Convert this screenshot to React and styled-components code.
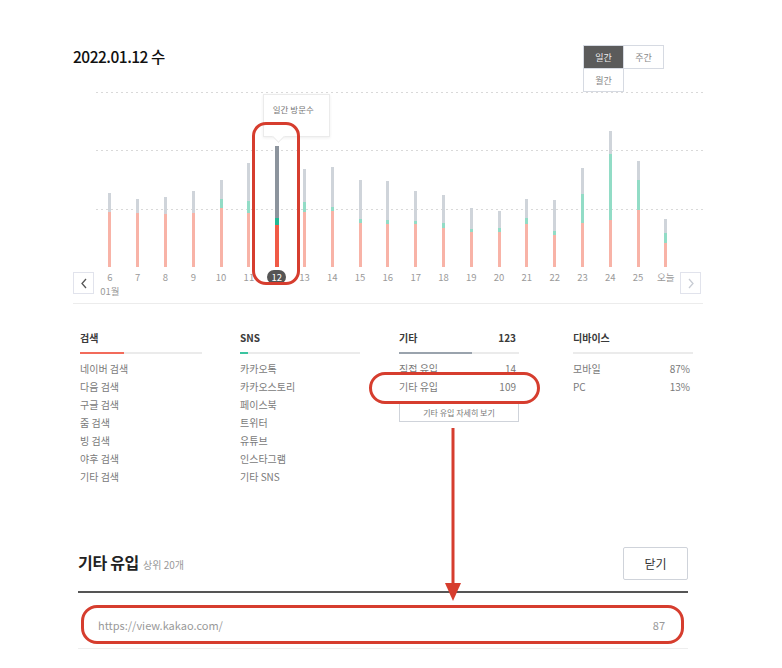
import styled, { createGlobalStyle } from "styled-components";

const GlobalStyle = createGlobalStyle`
  body {
    margin: 0;
    background: #fff;
    font-family: "Noto Sans CJK KR", "Noto Sans", sans-serif;
  }
`;

const RED = "#d63d2e";

const Page = styled.div`
  position: relative;
  width: 782px;
  height: 668px;
  padding: 45px 79px 0 73px;
  box-sizing: border-box;
  overflow: hidden;
`;

const Header = styled.div`
  display: flex;
  justify-content: space-between;
  align-items: flex-start;
  height: 46px;
  padding-right: 40px;
`;

const DateTitle = styled.h2`
  margin: 0;
  font-size: 15.5px;
  line-height: 22px;
  font-weight: 500;
  color: #111;
  letter-spacing: -0.5px;
`;

const Toggle = styled.div`
  display: grid;
  grid-template-columns: 40px 40px;
  grid-auto-rows: 23px;
`;

const ToggleButton = styled.button`
  margin: 0 -1px -1px 0;
  padding: 0;
  border: 1px solid #d6dae2;
  background: ${(p) => (p.$active ? "#5b5b5b" : "#fff")};
  color: ${(p) => (p.$active ? "#eee" : "#888")};
  font-family: inherit;
  font-size: 9px;
`;

const Chart = styled.div`
  display: grid;
  grid-template-columns: 23px 584px 23px;
  grid-template-rows: 175px 36px;
  margin-top: 1px;
  border-bottom: 1px solid #ececec;
`;

const PlotArea = styled.div`
  grid-column: 2 / 4;
  grid-row: 1;
  background-image: repeating-linear-gradient(90deg, #d9d9d9 0 2px, transparent 2px 5px),
    repeating-linear-gradient(90deg, #d9d9d9 0 2px, transparent 2px 5px),
    repeating-linear-gradient(90deg, #d9d9d9 0 2px, transparent 2px 5px);
  background-size: 100% 1px;
  background-position: 0 0, 0 58px, 0 117px;
  background-repeat: no-repeat;
`;

const Bars = styled.div`
  display: flex;
  width: 584px;
  height: 100%;
`;

const BarSlot = styled.div`
  position: relative;
  flex: 0 0 27.8px;
  display: flex;
  flex-direction: column;
  justify-content: flex-end;
  align-items: center;
`;

const Segment = styled.div`
  width: ${(p) => (p.$wide ? 4 : 3)}px;
  height: ${(p) => p.$h}px;
  background: ${(p) => p.$color};
`;

const Tooltip = styled.div`
  position: absolute;
  left: 0;
  top: 2px;
  z-index: 2;
  width: 67px;
  height: 43px;
  box-sizing: border-box;
  padding: 8px 9px;
  background: #fff;
  border: 1px solid #ebebeb;
  box-shadow: 0 1px 3px rgba(0, 0, 0, 0.07);
  font-size: 8.5px;
  line-height: 12px;
  color: #777;
  white-space: nowrap;

  &::after {
    content: "";
    position: absolute;
    left: 10px;
    bottom: -5px;
    width: 8px;
    height: 8px;
    background: #fff;
    border-right: 1px solid #ebebeb;
    border-bottom: 1px solid #ebebeb;
    transform: rotate(45deg);
  }
`;

const BarHighlight = styled.div`
  position: absolute;
  left: -11px;
  top: 30px;
  z-index: 3;
  width: 48px;
  height: 163px;
  box-sizing: border-box;
  border: 3px solid ${RED};
  border-radius: 14px;
  pointer-events: none;
`;

const Labels = styled.div`
  grid-column: 2;
  grid-row: 2;
  display: flex;
`;

const LabelSlot = styled.div`
  flex: 0 0 27.8px;
  padding-top: 3px;
  text-align: center;
  font-size: 9.5px;
  line-height: 14px;
  color: #9a9a9a;
  white-space: nowrap;
`;

const Pill = styled.span`
  display: inline-block;
  padding: 0 4px;
  border-radius: 7px;
  background: #555;
  color: #fff;
`;

const NavButton = styled.button`
  grid-column: ${(p) => p.$col};
  grid-row: 2;
  align-self: start;
  width: 21px;
  height: 22px;
  margin-top: 5px;
  padding: 0;
  border: 1px solid #e1e3ec;
  background: #fff;
  display: flex;
  align-items: center;
  justify-content: center;
`;

const Stats = styled.div`
  display: flex;
  align-items: flex-start;
  padding: 27px 0 0 7px;
`;

const Column = styled.div`
  width: ${(p) => p.$w}px;
  margin-left: ${(p) => p.$gap}px;
`;

const ColumnHead = styled.div`
  display: flex;
  justify-content: space-between;
  padding-right: 3px;
  font-size: 10px;
  line-height: 14px;
  font-weight: 700;
  color: #3a3a3a;
`;

const Track = styled.div`
  height: 2px;
  margin: 7px 0 6px;
  background: #ebebeb;
`;

const Fill = styled.div`
  height: 100%;
  width: ${(p) => p.$w}px;
  background: ${(p) => p.$color};
`;

const Row = styled.div`
  position: relative;
  display: flex;
  justify-content: space-between;
  padding-right: 3px;
  font-size: 10px;
  line-height: 18px;
  color: #7a7a7a;
`;

const RowHighlight = styled.div`
  position: absolute;
  left: -30px;
  top: -6px;
  width: 171px;
  height: 32px;
  box-sizing: border-box;
  border: 3px solid ${RED};
  border-radius: 16px;
  pointer-events: none;
`;

const MoreButton = styled.button`
  width: 120px;
  height: 19px;
  margin-top: 7px;
  padding: 0;
  border: 1px solid #cfd3da;
  background: #fff;
  font-family: inherit;
  font-size: 8px;
  color: #777;
`;

const Detail = styled.section`
  margin-top: 61px;
  padding: 0 15px 0 5px;
`;

const DetailHeader = styled.div`
  display: flex;
  justify-content: space-between;
  align-items: center;
  padding-bottom: 11px;
  border-bottom: 2px solid #555;
`;

const DetailTitle = styled.h3`
  margin: 0;
  font-size: 16px;
  line-height: 22px;
  font-weight: 700;
  color: #222;
  letter-spacing: -0.3px;

  span {
    margin-left: 4px;
    font-size: 10px;
    font-weight: 400;
    color: #999;
    letter-spacing: 0;
  }
`;

const CloseButton = styled.button`
  width: 65px;
  height: 33px;
  padding: 0;
  border: 1px solid #cfd3da;
  border-radius: 2px;
  background: #fff;
  font-family: inherit;
  font-size: 12px;
  color: #333;
`;

const DetailRow = styled.div`
  position: relative;
  display: flex;
  justify-content: space-between;
  padding: 24px 23px 15px 20px;
  font-size: 11px;
  line-height: 16px;
  color: #999;
  border-bottom: 1px solid #eee;
`;

const DetailHighlight = styled.div`
  position: absolute;
  left: 3px;
  right: 4px;
  top: 12px;
  height: 39px;
  box-sizing: border-box;
  border: 3px solid ${RED};
  border-radius: 16px;
  pointer-events: none;
`;

const Arrow = styled.svg`
  position: absolute;
  left: 445px;
  top: 428px;
`;

const bars = [
  ["6", 19, 0, 55],
  ["7", 14, 0, 54],
  ["8", 17, 0, 53],
  ["9", 22, 0, 54],
  ["10", 19, 9, 59],
  ["11", 38, 12, 54],
  ["12", 72, 7, 42],
  ["13", 33, 10, 55],
  ["14", 40, 4, 56],
  ["15", 39, 4, 44],
  ["16", 39, 4, 43],
  ["17", 30, 3, 43],
  ["18", 28, 5, 39],
  ["19", 21, 3, 35],
  ["20", 17, 4, 35],
  ["21", 19, 6, 43],
  ["22", 31, 4, 32],
  ["23", 26, 29, 44],
  ["24", 23, 66, 47],
  ["25", 19, 30, 57],
  ["오늘", 14, 10, 24],
];

const columns = [
  {
    title: "검색", w: 122, gap: 0, fill: 44, color: "#f26b5b",
    rows: [["네이버 검색"], ["다음 검색"], ["구글 검색"], ["줌 검색"], ["빙 검색"], ["야후 검색"], ["기타 검색"]],
  },
  {
    title: "SNS", w: 120, gap: 38, fill: 8, color: "#3bc4a0",
    rows: [["카카오톡"], ["카카오스토리"], ["페이스북"], ["트위터"], ["유튜브"], ["인스타그램"], ["기타 SNS"]],
  },
  {
    title: "기타", total: "123", w: 120, gap: 39, fill: 73, color: "#9aa3ad",
    rows: [["직접 유입", "14"], ["기타 유입", "109", true]],
    more: "기타 유입 자세히 보기",
  },
  {
    title: "디바이스", w: 120, gap: 54, fill: 0, color: "#ebebeb",
    rows: [["모바일", "87%"], ["PC", "13%"]],
  },
];

function Chevron({ dir }) {
  const pts = dir === "left" ? "7,2 3,6.5 7,11" : "3,2 7,6.5 3,11";
  return (
    <svg width="10" height="13" viewBox="0 0 10 13">
      <polyline points={pts} fill="none" stroke={dir === "left" ? "#555" : "#c8ccd4"} strokeWidth="1.3" />
    </svg>
  );
}

export default function App() {
  return (
    <Page>
      <GlobalStyle />
      <Header>
        <DateTitle>2022.01.12 수</DateTitle>
        <Toggle>
          <ToggleButton $active>일간</ToggleButton>
          <ToggleButton>주간</ToggleButton>
          <ToggleButton>월간</ToggleButton>
        </Toggle>
      </Header>

      <Chart>
        <PlotArea>
          <Bars>
            {bars.map(([label, gray, green, pink]) => {
              const sel = label === "12";
              return (
                <BarSlot key={label}>
                  {sel && <Tooltip>일간 방문수</Tooltip>}
                  {sel && <BarHighlight />}
                  <Segment $wide={sel} $h={gray} $color={sel ? "#8c949d" : "#cfd4da"} />
                  <Segment $wide={sel} $h={green} $color={sel ? "#23b894" : "#92dcc6"} />
                  <Segment $wide={sel} $h={pink} $color={sel ? "#f05a46" : "#f8b3a7"} />
                </BarSlot>
              );
            })}
          </Bars>
        </PlotArea>
        <NavButton $col={1}>
          <Chevron dir="left" />
        </NavButton>
        <Labels>
          {bars.map(([label], i) => (
            <LabelSlot key={label}>
              {label === "12" ? <Pill>{label}</Pill> : label}
              {i === 0 && <div>01월</div>}
            </LabelSlot>
          ))}
        </Labels>
        <NavButton $col={3}>
          <Chevron dir="right" />
        </NavButton>
      </Chart>

      <Stats>
        {columns.map((col) => (
          <Column key={col.title} $w={col.w} $gap={col.gap}>
            <ColumnHead>
              <span>{col.title}</span>
              {col.total && <span>{col.total}</span>}
            </ColumnHead>
            <Track>
              <Fill $w={col.fill} $color={col.color} />
            </Track>
            {col.rows.map(([name, value, marked]) => (
              <Row key={name}>
                <span>{name}</span>
                {value && <span>{value}</span>}
                {marked && <RowHighlight />}
              </Row>
            ))}
            {col.more && <MoreButton>{col.more}</MoreButton>}
          </Column>
        ))}
      </Stats>

      <Detail>
        <DetailHeader>
          <DetailTitle>
            기타 유입<span>상위 20개</span>
          </DetailTitle>
          <CloseButton>닫기</CloseButton>
        </DetailHeader>
        <DetailRow>
          <span>https://view.kakao.com/</span>
          <span>87</span>
          <DetailHighlight />
        </DetailRow>
      </Detail>

      <Arrow width="16" height="173" viewBox="0 0 16 173">
        <line x1="8" y1="0" x2="8" y2="158" stroke={RED} strokeWidth="3" />
        <polygon points="0,155 16,155 8,173" fill={RED} />
      </Arrow>
    </Page>
  );
}
